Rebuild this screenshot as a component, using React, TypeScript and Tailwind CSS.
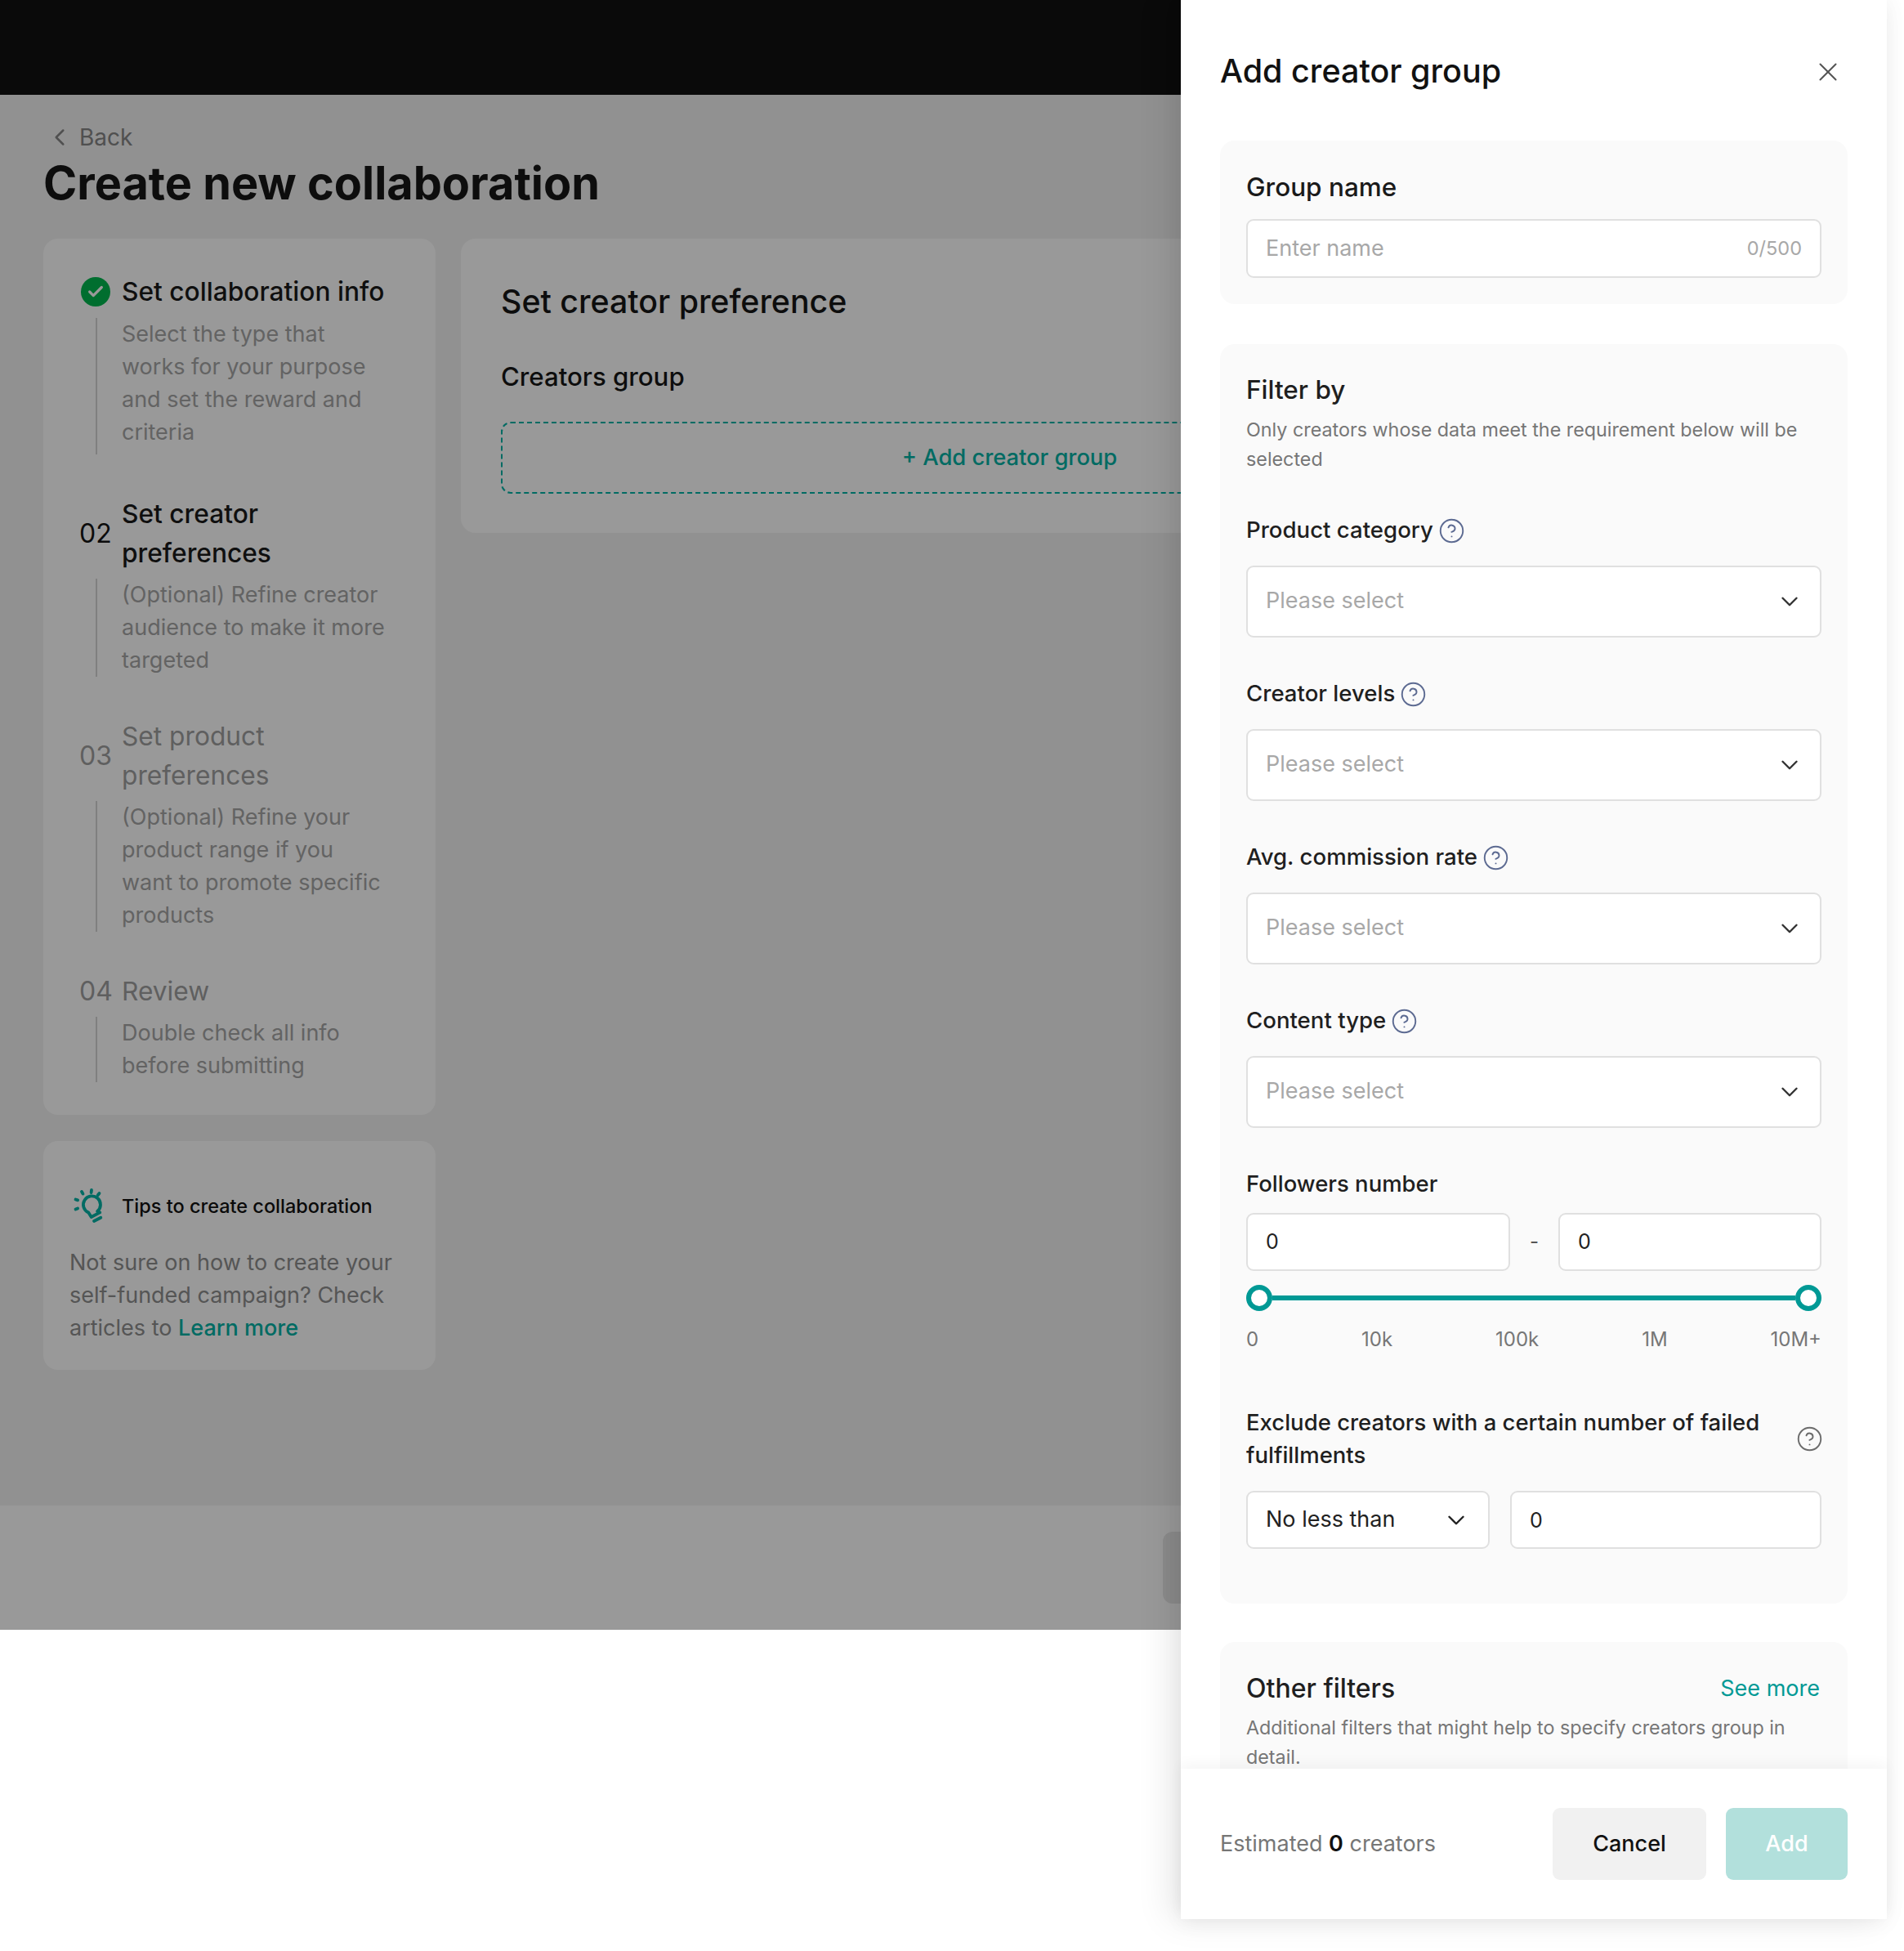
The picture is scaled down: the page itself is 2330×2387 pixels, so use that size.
import { ChevronDown, ChevronLeft, CircleHelp, X, Check } from "lucide-react";

const steps = [
  { num: "", title: ["Set collaboration info"], desc: ["Select the type that", "works for your purpose", "and set the reward and", "criteria"], done: true, active: true },
  { num: "02", title: ["Set creator", "preferences"], desc: ["(Optional) Refine creator", "audience to make it more", "targeted"], active: true },
  { num: "03", title: ["Set product", "preferences"], desc: ["(Optional) Refine your", "product range if you", "want to promote specific", "products"] },
  { num: "04", title: ["Review"], desc: ["Double check all info", "before submitting"] },
];

function Step({ step }: { step: (typeof steps)[number] }) {
  return (
    <div className="flex flex-col">
      <div className="flex items-center">
        {step.done ? (
          <div className="w-[36px] h-[36px] ml-[1px] mr-[14px] rounded-full bg-[#00b84f] flex items-center justify-center text-white">
            <Check size={22} strokeWidth={3.5} />
          </div>
        ) : (
          <div className={`w-[40px] mr-[12px] -ml-[1px] text-[32px] leading-[48px] ${step.active ? "text-[#141414]" : "text-[#9f9f9f]"}`}>{step.num}</div>
        )}
        <div className={`text-[31.7px] leading-[48px] ${step.active ? "font-medium text-[#1a1a1a]" : "text-[#9f9f9f]"}`}>
          {step.title.map((line) => (
            <div key={line}>{line}</div>
          ))}
        </div>
      </div>
      <div className={`ml-[19px] pl-[30px] border-l-2 border-[#d6d6d6] text-[27px] leading-[40px] text-[#a6a6a6] ${step.done ? "mt-[8px] pb-[7px]" : "mt-[7px]"}`}>
        {step.desc.map((line) => (
          <div key={line}>{line}</div>
        ))}
      </div>
    </div>
  );
}

function TipIcon() {
  return (
    <svg width="44" height="46" viewBox="0 0 44 46" fill="none" stroke="#00b2a5" strokeWidth="3.8" strokeLinecap="round" strokeLinejoin="round" className="ml-[3px]">
      <path d="M20.3 30.5a10.5 10.5 0 1 1 10.8 -1.5l3.2 1.4 -10.6 5.6 -3.4 -5.5z" />
      <path d="M27 41l8.3 -4.3" />
      <path d="M12 5l1.5 2.6M24 3l-.4 3M33.5 7l-1.8 2.2M4.5 14.5l2.6 .9M4.5 26.5l2.6 -1.1" />
    </svg>
  );
}

function Help({ gray }: { gray?: boolean }) {
  return <CircleHelp size={33} strokeWidth={1.4} className={gray ? "text-[#6b6b6b] -mr-[2px]" : "text-[#5c6a91]"} />;
}

function SelectField({ label }: { label: string }) {
  return (
    <div className="flex flex-col">
      <div className="h-[44px] flex items-center gap-[6px] text-[27.6px] font-medium text-[#1f1f1f]">
        {label}
        <Help />
      </div>
      <div className="mt-[20.5px] h-[88px] rounded-[9px] border-2 border-[#e0e0e0] bg-white pl-[22px] pr-[20px] flex items-center justify-between text-[27px] text-[#a8a8a8]">
        Please select
        <ChevronDown size={34} strokeWidth={1.7} className="text-[#333]" />
      </div>
    </div>
  );
}

function TextBox({ value, className }: { value: string; className: string }) {
  return (
    <input
      readOnly
      value={value}
      className={`h-[71px] rounded-[9px] border-2 border-[#e0e0e0] bg-white px-[22px] text-[25px] text-[#222] outline-none ${className}`}
    />
  );
}

function SliderHandle() {
  return <div className="w-[32px] h-[32px] rounded-full border-[6px] border-[#009995] bg-white shrink-0" />;
}

export default function App() {
  return (
    <div className="relative w-[2330px] h-[2387px] overflow-hidden bg-white font-['Inter',sans-serif]">
      <div className="h-[1994px] w-[2309px] flex flex-col">
        <div className="h-[116px] bg-[#121212]" />
        <div className="flex-1 bg-[#f2f2f2] px-[53px]">
          <div className="h-[176px] flex flex-col">
            <div className="mt-[32px] h-[40px] flex items-center gap-[7px] text-[#858585] text-[28px] pl-[3px]">
              <ChevronLeft size={34} strokeWidth={1.8} />
              <span>Back</span>
            </div>
            <h1 className="mt-[2px] text-[55.8px] leading-[68px] font-bold text-[#171717]">Create new collaboration</h1>
          </div>
          <div className="flex items-start gap-[31px]">
            <div className="w-[480px] flex flex-col gap-[32px]">
              <div className="rounded-[18px] bg-white pl-[45px] pr-[16px] pt-[41px] pb-[40px] flex flex-col gap-[49px]">
                {steps.map((step) => (
                  <Step key={step.title[0]} step={step} />
                ))}
              </div>
              <div className="rounded-[18px] bg-white px-[32px] pt-[57px] h-[280px]">
                <div className="flex items-center">
                  <TipIcon />
                  <span className="ml-[17px] text-[23.5px] font-medium text-[#111]">Tips to create collaboration</span>
                </div>
                <p className="mt-[26px] text-[27px] leading-[40px] text-[#8e8e8e]">
                  Not sure on how to create your self-funded campaign? Check articles to{" "}
                  <span className="font-medium text-[#00b2a5]">Learn more</span>
                </p>
              </div>
            </div>
            <div className="w-[1342px] h-[360px] rounded-[18px] bg-white pl-[49px] pr-[48px] pt-[48px]">
              <h2 className="text-[39.3px] leading-[58px] font-medium text-[#171717]">Set creator preference</h2>
              <h3 className="mt-[39px] text-[31.2px] leading-[48px] font-medium text-[#171717]">Creators group</h3>
              <div className="mt-[31px] h-[88px] rounded-[12px] border-2 border-dashed border-[#00b2a5] flex items-center justify-center text-[27.3px] font-medium text-[#00b2a5]">
                + Add creator group
              </div>
            </div>
          </div>
        </div>
        <div className="h-[152px] bg-white pt-[32px] pl-[1423px]">
          <div className="w-[200px] h-[88px] rounded-[12px] bg-[#e8e8e8]" />
        </div>
      </div>

      {/* dim layer over the page */}
      <div className="absolute left-0 top-0 w-[2309px] h-[1994px] bg-black/40" />

      {/* side panel */}
      <div className="absolute left-[1445px] top-0 w-[864px] h-[2348px] bg-white flex flex-col shadow-[-14px_0_40px_rgba(0,0,0,0.09),0_4px_24px_rgba(0,0,0,0.05)]">
        <div className="flex-1 overflow-hidden px-[48px]">
          <div className="h-[172px] pt-[4px] flex items-center justify-between">
            <h2 className="text-[39.5px] font-medium text-[#111]">Add creator group</h2>
            <X size={38} strokeWidth={1.3} className="text-[#555] mr-[5px]" />
          </div>

          <div className="h-[200px] rounded-[18px] bg-[#fafafa] px-[32px] pt-[32px]">
            <div className="text-[31.5px] leading-[50px] font-medium text-[#1a1a1a]">Group name</div>
            <div className="mt-[14px] h-[72px] rounded-[9px] border-2 border-[#e0e0e0] bg-white px-[22px] flex items-center justify-between">
              <input readOnly placeholder="Enter name" className="w-[400px] text-[27px] outline-none bg-transparent placeholder:text-[#a8a8a8]" />
              <span className="text-[23.5px] text-[#a8a8a8]">0/500</span>
            </div>
          </div>

          <div className="mt-[49px] h-[1541px] rounded-[18px] bg-[#fafafa] px-[32px] pt-[32px]">
            <div className="text-[31.5px] leading-[48px] font-medium text-[#1f1f1f]">Filter by</div>
            <p className="mt-[7px] text-[23.3px] leading-[36px] text-[#767676]">
              Only creators whose data meet the requirement below will be selected
            </p>
            <div className="mt-[47px] flex flex-col gap-[47.5px]">
              <SelectField label="Product category" />
              <SelectField label="Creator levels" />
              <SelectField label="Avg. commission rate" />
              <SelectField label="Content type" />
            </div>

            <div className="mt-[46px] text-[27.5px] leading-[44px] font-medium text-[#1f1f1f]">Followers number</div>
            <div className="mt-[14px] flex items-center">
              <TextBox value="0" className="w-[323px]" />
              <span className="flex-1 text-center text-[24px] text-[#555]">-</span>
              <TextBox value="0" className="w-[322px]" />
            </div>
            <div className="mt-[17px] flex items-center">
              <SliderHandle />
              <div className="flex-1 h-[6px] bg-[#009995]" />
              <SliderHandle />
            </div>
            <div className="mt-[18px] flex justify-between text-[24px] leading-[34px] text-[#767676]">
              <span>0</span>
              <span>10k</span>
              <span>100k</span>
              <span>1M</span>
              <span>10M+</span>
            </div>

            <div className="mt-[64.5px] flex items-center justify-between">
              <div className="w-[660px] text-[27.5px] leading-[40px] font-medium text-[#1f1f1f]">
                Exclude creators with a certain number of failed fulfillments
              </div>
              <Help gray />
            </div>
            <div className="mt-[24px] flex items-center gap-[25px]">
              <div className="w-[298px] h-[71px] rounded-[9px] border-2 border-[#e0e0e0] bg-white pl-[22px] pr-[22px] flex items-center justify-between text-[27px] text-[#222]">
                No less than
                <ChevronDown size={34} strokeWidth={1.7} className="text-[#222]" />
              </div>
              <TextBox value="0" className="flex-1 min-w-0" />
            </div>
          </div>

          <div className="mt-[47px] h-[300px] rounded-[18px] bg-[#fafafa] px-[32px] pt-[33px]">
            <div className="flex items-center justify-between">
              <div className="text-[32px] leading-[48px] font-medium text-[#1f1f1f]">Other filters</div>
              <div className="text-[27px] text-[#009995] mr-[2px]">See more</div>
            </div>
            <p className="mt-[6px] text-[23.3px] leading-[36px] text-[#767676]">
              Additional filters that might help to specify creators group in detail.
            </p>
          </div>
        </div>

        <div className="relative h-[184px] shrink-0 bg-white px-[48px] flex items-center justify-between shadow-[0_-6px_16px_rgba(0,0,0,0.04)]">
          <div className="text-[27px] text-[#767676]">
            Estimated <span className="font-semibold text-[#111]">0</span> creators
          </div>
          <div className="flex gap-[24px]">
            <button className="w-[188px] h-[88px] rounded-[9px] bg-[#f1f1f1] text-[27px] font-medium text-[#111]">Cancel</button>
            <button className="w-[149px] h-[88px] rounded-[9px] bg-[#b2e0dc] text-[27px] font-medium text-white">Add</button>
          </div>
        </div>
      </div>
    </div>
  );
}
